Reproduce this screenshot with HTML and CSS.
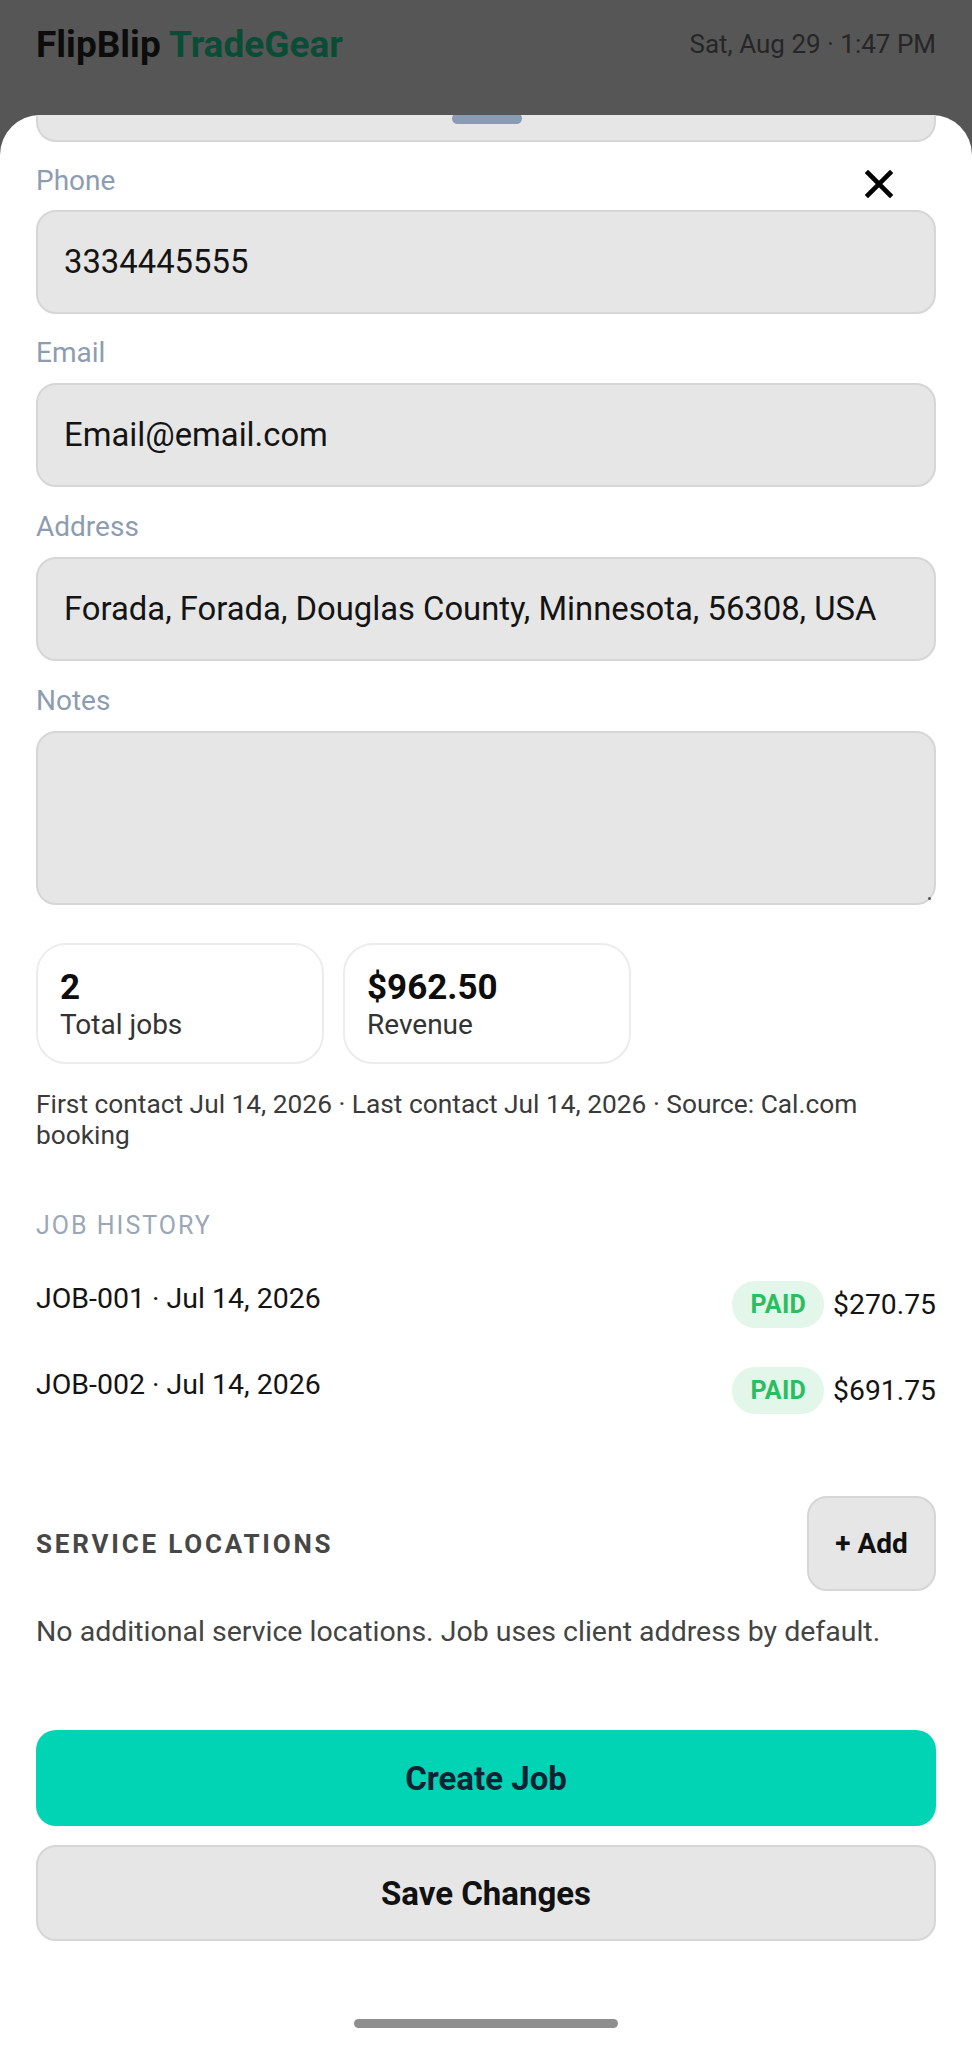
FILE: index.html
```html
<!DOCTYPE html>
<html lang="en">
<head>
<meta charset="utf-8">
<title>FlipBlip TradeGear – Client</title>
<link rel="stylesheet" href="styles.css">
</head>
<body>
<header class="topbar">
  <div class="brand">FlipBlip <span class="brand-accent">TradeGear</span></div>
  <div class="clock">Sat, Aug 29 · 1:47 PM</div>
</header>

<section class="sheet">
  <div class="handle"></div>
  <div class="sheet-body">
    <div class="clip-field"></div>

    <div class="field">
      <div class="label-row">
        <label class="label">Phone</label>
        <button class="close" aria-label="Close">
          <svg width="28" height="28" viewBox="0 0 28 28"><path d="M3 3L25 25M25 3L3 25" stroke="#000" stroke-width="4.6" stroke-linecap="square" fill="none"/></svg>
        </button>
      </div>
      <div class="input">3334445555</div>
    </div>

    <div class="field">
      <label class="label">Email</label>
      <div class="input">Email@email.com</div>
    </div>

    <div class="field field-lower">
      <label class="label">Address</label>
      <div class="input">Forada, Forada, Douglas County, Minnesota, 56308, USA</div>
    </div>

    <div class="field field-lower">
      <label class="label">Notes</label>
      <div class="input textarea"><span class="grip"></span></div>
    </div>

    <div class="stats">
      <div class="stat">
        <div class="stat-value">2</div>
        <div class="stat-label">Total jobs</div>
      </div>
      <div class="stat">
        <div class="stat-value">$962.50</div>
        <div class="stat-label">Revenue</div>
      </div>
    </div>

    <p class="meta">First contact Jul 14, 2026 · Last contact Jul 14, 2026 · Source: Cal.com booking</p>

    <h3 class="section-muted">JOB HISTORY</h3>
    <div class="jobs">
      <div class="job">
        <div class="job-name">JOB-001 · Jul 14, 2026</div>
        <div class="job-right"><span class="badge">PAID</span><span class="amount">$270.75</span></div>
      </div>
      <div class="job">
        <div class="job-name">JOB-002 · Jul 14, 2026</div>
        <div class="job-right"><span class="badge">PAID</span><span class="amount">$691.75</span></div>
      </div>
    </div>

    <div class="loc-head">
      <h3 class="section-strong">SERVICE LOCATIONS</h3>
      <button class="btn-add">+ Add</button>
    </div>
    <p class="loc-note">No additional service locations. Job uses client address by default.</p>

    <div class="actions">
      <button class="btn btn-primary">Create Job</button>
      <button class="btn btn-secondary">Save Changes</button>
    </div>

    <div class="home-bar"></div>
  </div>
</section>
</body>
</html>
```

FILE: styles.css
```css
* { box-sizing: border-box; }

html, body {
  margin: 0;
  padding: 0;
}

body {
  width: 972px;
  height: 2049px;
  overflow: hidden;
  background: #565656;
  font-family: Roboto, "Noto Sans", "Liberation Sans", sans-serif;
  color: #111;
}

.topbar {
  height: 88px;
  padding: 0 36px;
  display: flex;
  align-items: center;
  justify-content: space-between;
  margin-bottom: 27px;
}

.brand {
  font-size: 37px;
  font-weight: 700;
  color: #0c0c0c;
}

.brand-accent {
  color: #0b4c36;
}

.clock {
  font-size: 26px;
  color: #262626;
}

.sheet {
  position: relative;
  height: 1934px;
  background: #fff;
  border-radius: 40px 40px 0 0;
  overflow: hidden;
}

.handle {
  position: absolute;
  top: -2px;
  left: 452px;
  width: 70px;
  height: 11px;
  border-radius: 6px;
  background: #8a9cb4;
  z-index: 2;
}

.sheet-body {
  padding: 0 36px;
  display: flex;
  flex-direction: column;
}

.clip-field {
  height: 27px;
  background: #e6e6e6;
  border: 2px solid #d6d6d6;
  border-top: none;
  border-radius: 0 0 20px 20px;
  margin-bottom: 21px;
}

.field {
  display: flex;
  flex-direction: column;
  margin-bottom: 21px;
}

.field-lower {
  margin-top: 1px;
}

.label-row {
  display: flex;
  align-items: center;
  justify-content: space-between;
}

.label {
  font-size: 28px;
  line-height: 36px;
  color: #8d9db1;
  margin-bottom: 12px;
}

.label-row .label {
  margin-bottom: 11px;
}

.close {
  border: none;
  background: none;
  padding: 0;
  margin: -6px 43px 0 0;
  width: 28px;
  height: 28px;
  display: flex;
}

.input {
  height: 104px;
  background: #e6e6e6;
  border: 2px solid #d6d6d6;
  border-radius: 20px;
  padding: 0 26px;
  display: flex;
  align-items: center;
  font-size: 32.8px;
  color: #141414;
}

.textarea {
  height: 174px;
  position: relative;
}

.grip {
  position: absolute;
  right: 3px;
  bottom: 3px;
  width: 3px;
  height: 3px;
  border-radius: 50%;
  background: #555;
}

.stats {
  display: flex;
  gap: 19px;
  margin-top: 17px;
}

.stat {
  width: 288px;
  height: 121px;
  border: 2px solid #ececec;
  border-radius: 30px;
  padding: 23px 22px 0;
}

.stat-value {
  font-size: 35px;
  font-weight: 700;
  line-height: 40px;
  color: #0d0d0d;
}

.stat-label {
  font-size: 28px;
  line-height: 34px;
  color: #333;
}

.meta {
  margin: 25px 0 0;
  font-size: 26.3px;
  line-height: 31px;
  color: #3a3a3a;
}

.section-muted {
  margin: 59px 0 0;
  font-size: 25px;
  line-height: 31px;
  font-weight: 400;
  letter-spacing: 2px;
  color: #9aa7b6;
}

.jobs {
  display: flex;
  flex-direction: column;
  gap: 39px;
  margin-top: 40px;
}

.job {
  display: flex;
  justify-content: space-between;
  align-items: flex-start;
}

.job-name {
  font-size: 28.5px;
  line-height: 36px;
  color: #141414;
}

.job-right {
  display: flex;
  align-items: center;
  gap: 9px;
}

.badge {
  height: 47px;
  padding: 0 18px;
  border-radius: 23px;
  background: #e3f6ea;
  color: #2bbd5f;
  font-size: 25px;
  font-weight: 700;
  letter-spacing: 0.3px;
  display: flex;
  align-items: center;
}

.amount {
  font-size: 28.3px;
  color: #141414;
}

.loc-head {
  display: flex;
  align-items: center;
  justify-content: space-between;
  margin-top: 82px;
}

.section-strong {
  margin: 0;
  font-size: 26px;
  font-weight: 700;
  letter-spacing: 2.8px;
  color: #474747;
}

.btn-add {
  width: 129px;
  height: 95px;
  background: #e6e6e6;
  border: 2px solid #d6d6d6;
  border-radius: 20px;
  font-family: inherit;
  font-size: 28px;
  font-weight: 700;
  color: #111;
  padding: 0;
}

.loc-note {
  margin: 25px 0 0;
  font-size: 28.5px;
  line-height: 32px;
  color: #444;
}

.actions {
  display: flex;
  flex-direction: column;
  gap: 19px;
  margin-top: 82px;
}

.btn {
  height: 96px;
  border-radius: 20px;
  font-family: inherit;
  font-size: 33px;
  font-weight: 700;
  padding: 0;
}

.btn-primary {
  background: #00d4b4;
  border: none;
  color: #0e2233;
}

.btn-secondary {
  background: #e6e6e6;
  border: 2px solid #d6d6d6;
  color: #111;
}

.home-bar {
  align-self: center;
  width: 264px;
  height: 9px;
  border-radius: 5px;
  background: #8e8e8e;
  margin-top: 78px;
}
```
